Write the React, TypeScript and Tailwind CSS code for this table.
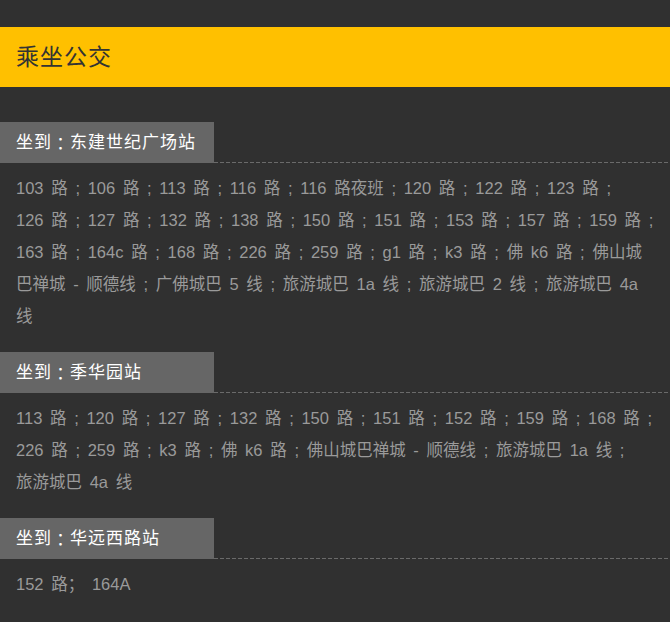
import React from "react";

const FONT = { fontFamily: '"Liberation Sans", "Noto Sans CJK SC", sans-serif' };

const sections: { station: string; lines: string[] }[] = [
  {
    station: "东建世纪广场站",
    lines: [
      "103 路 ; 106 路 ; 113 路 ; 116 路 ; 116 路夜班 ; 120 路 ; 122 路 ; 123 路 ;",
      "126 路 ; 127 路 ; 132 路 ; 138 路 ; 150 路 ; 151 路 ; 153 路 ; 157 路 ; 159 路 ;",
      "163 路 ; 164c 路 ; 168 路 ; 226 路 ; 259 路 ; g1 路 ; k3 路 ; 佛 k6 路 ; 佛山城",
      "巴禅城 - 顺德线 ; 广佛城巴 5 线 ; 旅游城巴 1a 线 ; 旅游城巴 2 线 ; 旅游城巴 4a",
      "线",
    ],
  },
  {
    station: "季华园站",
    lines: [
      "113 路 ; 120 路 ; 127 路 ; 132 路 ; 150 路 ; 151 路 ; 152 路 ; 159 路 ; 168 路 ;",
      "226 路 ; 259 路 ; k3 路 ; 佛 k6 路 ; 佛山城巴禅城 - 顺德线 ; 旅游城巴 1a 线 ;",
      "旅游城巴 4a 线",
    ],
  },
  {
    station: "华远西路站",
    lines: ["152 路； 164A"],
  },
];

function Section({ station, lines }: { station: string; lines: string[] }) {
  return (
    <div>
      <div className="flex items-end">
        <div className="w-[214px] h-[41px] bg-[#666666] flex items-center pl-4 text-[17px] tracking-[1px] text-white">
          坐到<span className="font-['Noto_Sans_CJK_TC']">：</span>
          {station}
        </div>
        <div className="flex-1 h-px bg-[repeating-linear-gradient(to_right,#6a6a6a_0px,#6a6a6a_4px,transparent_4px,transparent_6px)]" />
      </div>
      <div className="pl-4 pr-2 pt-[9px] pb-5 text-[16.5px] leading-[32px] [word-spacing:3.1px] text-[#9a9a9a]">
        {lines.map((l, i) => (
          <React.Fragment key={i}>
            {i > 0 && <br />}
            {l}
          </React.Fragment>
        ))}
      </div>
    </div>
  );
}

export default function App() {
  return (
    <div className="w-[670px] min-h-[622px] bg-[#303030] pt-[27px]" style={FONT}>
      <div className="h-[60px] bg-[#ffc000] flex items-center pl-4 text-[23px] tracking-[1px] text-[#333333]">
        乘坐公交
      </div>
      <div className="pt-[35px]">
        {sections.map((s) => (
          <Section key={s.station} station={s.station} lines={s.lines} />
        ))}
      </div>
    </div>
  );
}
